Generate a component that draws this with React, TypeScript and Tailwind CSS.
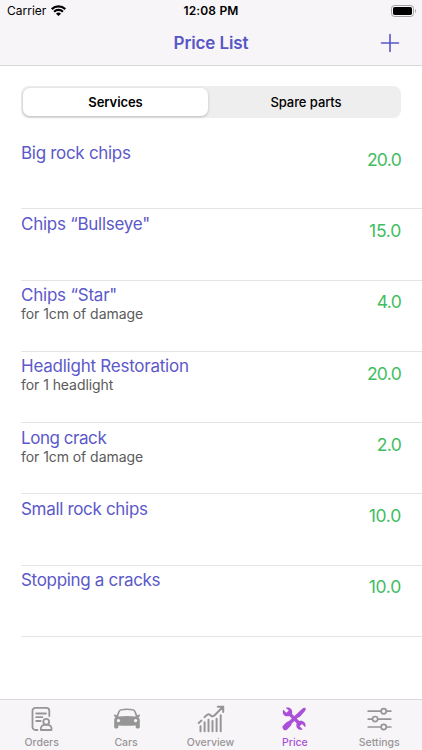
import React from "react";

type Item = { name: string; note?: string; price: string; tracking: string; priceTracking: string };

const items: Item[] = [
  { name: "Big rock chips", price: "20.0", tracking: "tracking-[-0.3px]", priceTracking: "tracking-[-0.700px]" },
  { name: "Chips “Bullseye\"", price: "15.0", tracking: "tracking-[-0.260px]", priceTracking: "tracking-[-0.250px]" },
  { name: "Chips “Star\"", note: "for 1cm of damage", price: "4.0", tracking: "tracking-[-0.220px]", priceTracking: "tracking-[-0.700px]" },
  { name: "Headlight Restoration", note: "for 1 headlight", price: "20.0", tracking: "tracking-[-0.240px]", priceTracking: "tracking-[-0.700px]" },
  { name: "Long crack", note: "for 1cm of damage", price: "2.0", tracking: "tracking-[-0.450px]", priceTracking: "tracking-[-0.700px]" },
  { name: "Small rock chips", price: "10.0", tracking: "tracking-[-0.320px]", priceTracking: "tracking-[-0.250px]" },
  { name: "Stopping a cracks", price: "10.0", tracking: "tracking-[-0.320px]", priceTracking: "tracking-[-0.250px]" },
];

function WifiIcon() {
  return (
    <svg className="-mt-px ml-[5px] h-[11px] w-[15px]" viewBox="0 0 15 11" fill="none" stroke="#000" strokeWidth="2.200">
      <path d="M.7 4.100a9.800 9.800 0 0 1 13.600 0" />
      <path d="M3.100 6.700a6.300 6.300 0 0 1 8.800 0" />
      <path d="M5 8.700a3.600 3.600 0 0 1 5 0L7.500 11z" fill="#000" stroke="none" />
    </svg>
  );
}

function BatteryIcon() {
  return (
    <svg className="-mt-px h-[12px] w-[26px]" viewBox="0 0 26 12">
      <rect x=".5" y=".5" width="22" height="11" rx="3" fill="none" stroke="#a3a2a3" />
      <rect x="2" y="2" width="19" height="8" rx="1.700" fill="#000" />
      <path d="M24 4v4c1.300-.7 1.300-3.300 0-4z" fill="#a3a2a3" />
    </svg>
  );
}

function OrdersIcon() {
  return (
    <svg className="h-[28px] w-[28px]" viewBox="0 0 28 28" fill="none" stroke="currentColor" strokeWidth="1.800" strokeLinecap="round" strokeLinejoin="round">
      <path d="M9.500 25H7.500a3 3 0 0 1-3-3V5.800a3 3 0 0 1 3-3h10.800a3 3 0 0 1 3 3V11" />
      <path d="M8.200 8.500h9.800M8.200 12.200h6.200M8.200 16h4.500" />
      <circle cx="18.200" cy="16.800" r="2.900" />
      <path d="M12.900 25c-.5-3.300 1.300-4.900 3.400-5.200h3.800c2.100.3 3.900 1.900 3.400 5.200z" />
    </svg>
  );
}

function CarIcon() {
  return (
    <svg className="h-[28px] w-[28px]" viewBox="0 0 28 28" fill="currentColor">
      <path fillRule="evenodd" d="M7.700 4.200Q14 2.900 20.300 4.200c1.300.3 2.100 1.300 2.600 2.600l1.400 3.500 1.900-.8c.8-.2 1.300 1.300.5 1.700l-1.200.8c.9 1 1.300 2.200 1.300 3.700v6.300c0 .9-.5 1.400-1.300 1.400h-1.500c-.8 0-1.300-.5-1.300-1.400v-1.600Q14 21.100 5.300 20.400V22c0 .9-.5 1.400-1.300 1.400H2.500c-.8 0-1.300-.5-1.300-1.400v-6.300c0-1.500.4-2.700 1.300-3.700l-1.200-.8c-.8-.4-.3-1.900.5-1.700l1.900.8 1.400-3.500c.5-1.300 1.300-2.300 2.600-2.600zM8.300 5.600c-.8.2-1.400.8-1.700 1.600l-1.400 4.200q8.800-.9 17.600 0l-1.400-4.200c-.3-.8-.9-1.400-1.700-1.600Q14 4.600 8.300 5.600zM5.400 14a1.600 1.600 0 1 0 .1 3.200 1.600 1.600 0 0 0-.1-3.200zm17.200 0a1.600 1.600 0 1 0 .1 3.200 1.600 1.600 0 0 0-.1-3.200z" />
    </svg>
  );
}

function OverviewIcon() {
  return (
    <svg className="h-[28px] w-[28px]" viewBox="0 0 28 28" fill="none" stroke="currentColor" strokeLinecap="round">
      <path strokeWidth="2" d="M3.500 21.200v5M7.600 17.200v9M11.500 14.700v11.500M15.500 16v10.200M19.600 13.700v12.500M23.700 10.300v15.900" />
      <path strokeWidth="2" d="M1.700 18l2.800-2.400M7.500 12.200c3.600-4 4.800-3.200 6.600-1.500 1.300 1.200 2.300.6 3.500-.5l7.700-7.700M20.800 1.700h5.400v5.400" />
    </svg>
  );
}

function ToolsIcon() {
  return (
    <svg className="h-[28px] w-[28px]" viewBox="0.800 0 29 28" fill="currentColor">
      <path d="M3 4.300l3.400 3.300 2.500-2.300L5.600 2.300c3.700-1 7 1 6.800 4.800l-.2 1.600 7.500 7.500c3.500-1.200 7 1.400 6.500 5.300l-.3 1-3.300-3.200-2.500 2.300 3.300 3.200c-3.800 1.400-7-1-6.700-4.800l.3-1.600-7.500-7.500C5 12.300 1.400 9.200 3 4.300z" />
      <path d="M17 8.800l5.500-5.200c1.400-1.200 2.900-1.600 3.600-.9.700.7.300 2.200-.9 3.600L20.200 12l-2.200.7-6.200 6.200-.8 2.200-3.500 3.600a2.800 2.800 0 0 1-4.200-4.100l3.500-3.600 2.300-.8 7-6.500z" />
    </svg>
  );
}

function SettingsIcon() {
  return (
    <svg className="h-[28px] w-[28px]" viewBox="0 0 28 28" fill="none" stroke="currentColor" strokeWidth="1.700" strokeLinecap="round">
      <path d="M2.200 6.200h12.700M20.500 6.200h4.300M2.200 14.100h4M12 14.100h12.800M2.200 22h12.700M20.500 22h4.300" />
      <circle cx="17.700" cy="6.200" r="2.600" />
      <circle cx="9.100" cy="14.100" r="2.600" />
      <circle cx="17.700" cy="22" r="2.600" />
    </svg>
  );
}

const tabs = [
  { label: "Orders", Icon: OrdersIcon },
  { label: "Cars", Icon: CarIcon },
  { label: "Overview", Icon: OverviewIcon },
  { label: "Price", Icon: ToolsIcon, active: true },
  { label: "Settings", Icon: SettingsIcon },
];

export default function App() {
  return (
    <div className="flex h-[750px] w-[422px] flex-col overflow-hidden bg-white font-['Inter',sans-serif]">
      <header className="h-[66px] shrink-0 border-b border-[#d9d8da] bg-[#f7f5f7]">
        <div className="grid h-[22px] grid-cols-3 items-center text-[12px] text-black">
          <div className="flex items-center pl-[7px]">
            <span>Carrier</span>
            <WifiIcon />
          </div>
          <div className="text-center font-semibold tracking-[0.160px]">12:08 PM</div>
          <div className="flex justify-end pr-[5px]">
            <BatteryIcon />
          </div>
        </div>
        <div className="grid h-[42px] grid-cols-3 items-center text-[#5856c6]">
          <span />
          <h1 className="text-center text-[17px] leading-5 font-semibold tracking-[-0.120px]">Price List</h1>
          <button className="mr-[22px] justify-self-end" aria-label="Add">
            <svg className="h-[20px] w-[20px]" viewBox="0 0 20 20" stroke="currentColor" strokeWidth="1.600" strokeLinecap="round">
              <path d="M10 1.500v17M1.500 10h17" />
            </svg>
          </button>
        </div>
      </header>

      <main className="min-h-0 grow">
        <div className="mx-[21px] mt-5 flex h-[32px] rounded-[8px] bg-[#eeeeef] p-[2px] text-[13px] text-black">
          <button className="w-[185px] rounded-[7px] bg-white pt-px font-semibold tracking-[-0.080px] shadow-[0_1px_3px_rgba(0,0,0,0.22)]">Services</button>
          <button className="grow pt-px pl-[5px] font-medium tracking-[-0.080px]">Spare parts</button>
        </div>
        <ul className="mt-[20px]">
          {items.map((item) => (
            <li key={item.name} className="ml-[21px] flex h-[71.250px] justify-between border-b border-[#e4e4e6] pr-[21px]">
              <div className="pt-[4.500px]">
                <div className={`text-[17px] leading-[20px] text-[#5c59c9] ${item.tracking}`}>{item.name}</div>
                {item.note && <div className="text-[14px] leading-[17px] tracking-[-0.060px] text-[#5b5b5b]">{item.note}</div>}
              </div>
              <div className={`pt-[11.800px] text-[17.500px] leading-[20px] text-[#41bd61] ${item.priceTracking}`}>{item.price}</div>
            </li>
          ))}
        </ul>
      </main>

      <nav className="grid h-[51px] shrink-0 grid-cols-5 border-t border-[#d9d8da] bg-[#f7f5f7]">
        {tabs.map(({ label, Icon, active }) => (
          <div key={label} className={`flex flex-col items-center pt-[5px] ${active ? "text-[#aa50d8]" : "text-[#979697]"}`}>
            <Icon />
            <span className="mt-[3px] -ml-px text-[10.500px] leading-[13px] font-medium">{label}</span>
          </div>
        ))}
      </nav>
    </div>
  );
}
